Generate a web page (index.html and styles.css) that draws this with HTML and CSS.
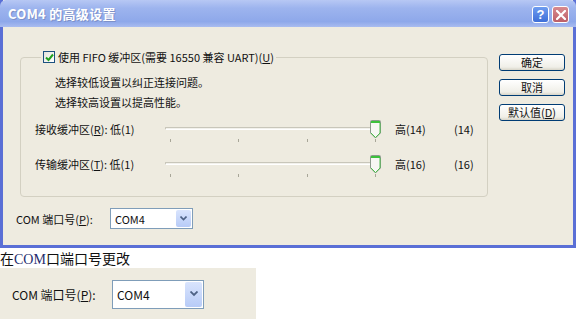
FILE: index.html
```html
<!DOCTYPE html>
<html lang="zh-CN">
<head>
    <meta charset="UTF-8">
    <title>COM4 的高级设置</title>
    <link rel="stylesheet" href="styles.css">
</head>
<body>

<div class="dialog">
    <div class="titlebar">
        <span class="title">COM4 的高级设置</span>
        <span class="title-btns">
            <span class="tbtn help">?</span>
            <span class="tbtn close">
                <svg width="10" height="10" viewBox="0 0 10 10"><path d="M1 1 L9 9 M9 1 L1 9" stroke="#fff" stroke-width="2.2" stroke-linecap="square"/></svg>
            </span>
        </span>
    </div>

    <div class="dialog-body">
        <div class="main">
            <fieldset class="group">
                <legend>
                    <span class="check">
                        <svg width="9" height="9" viewBox="0 0 9 9"><path d="M1 4.5 L3.5 7 L8 1.5" stroke="#21a121" stroke-width="2" fill="none"/></svg>
                    </span>
                    <span>使用 FIFO 缓冲区(需要 16550 兼容 UART)(<u>U</u>)</span>
                </legend>
                <p class="hint">选择较低设置以纠正连接问题。</p>
                <p class="hint">选择较高设置以提高性能。</p>

                <div class="slider-row first">
                    <span class="slider-label">接收缓冲区(<u>R</u>): 低(1)</span>
                    <div class="slider">
                        <div class="track"></div>
                        <div class="ticks"><i></i><i></i><i></i><i></i></div>
                        <svg class="thumb" width="11" height="19" viewBox="0 0 11 19">
                            <path d="M0.5 1.5 Q0.5 0.5 1.5 0.5 L9.5 0.5 Q10.5 0.5 10.5 1.5 L10.5 13 L5.5 18 L0.5 13 Z" fill="#f7f7f4" stroke="#8c9a8c"/>
                            <path d="M1 1 L10 1 L10 3 L1 3 Z" fill="#3cc13c"/>
                            <path d="M10 3 L10 13 L5.5 17.5 M1 13 L5.5 17.5" stroke="#4cbd4c" stroke-width="1" fill="none"/>
                        </svg>
                    </div>
                    <span class="slider-high">高(14)</span>
                    <span class="slider-val">(14)</span>
                </div>

                <div class="slider-row">
                    <span class="slider-label">传输缓冲区(<u>T</u>): 低(1)</span>
                    <div class="slider">
                        <div class="track"></div>
                        <div class="ticks"><i></i><i></i><i></i><i></i></div>
                        <svg class="thumb" width="11" height="19" viewBox="0 0 11 19">
                            <path d="M0.5 1.5 Q0.5 0.5 1.5 0.5 L9.5 0.5 Q10.5 0.5 10.5 1.5 L10.5 13 L5.5 18 L0.5 13 Z" fill="#f7f7f4" stroke="#8c9a8c"/>
                            <path d="M1 1 L10 1 L10 3 L1 3 Z" fill="#3cc13c"/>
                            <path d="M10 3 L10 13 L5.5 17.5 M1 13 L5.5 17.5" stroke="#4cbd4c" stroke-width="1" fill="none"/>
                        </svg>
                    </div>
                    <span class="slider-high">高(16)</span>
                    <span class="slider-val">(16)</span>
                </div>
            </fieldset>

            <div class="port-row">
                <span class="port-label">COM 端口号(<u>P</u>):</span>
                <div class="combo">
                    <span class="combo-text">COM4</span>
                    <span class="combo-btn">
                        <svg width="7" height="5" viewBox="0 0 7 5"><path d="M0.5 0.5 L3.5 3.5 L6.5 0.5" stroke="#4d6185" stroke-width="1.6" fill="none"/></svg>
                    </span>
                </div>
            </div>
        </div>

        <div class="buttons">
            <a class="btn">确定</a>
            <a class="btn">取消</a>
            <a class="btn">默认值(<u>D</u>)</a>
        </div>
    </div>
</div>

<p class="caption">在<span class="latin">COM</span>口端口号更改</p>

<div class="zoom-box">
    <span class="port-label">COM 端口号(<u>P</u>):</span>
    <div class="combo big">
        <span class="combo-text">COM4</span>
        <span class="combo-btn">
            <svg width="8" height="6" viewBox="0 0 8 6"><path d="M0.5 0.5 L4 4 L7.5 0.5" stroke="#4d6185" stroke-width="1.8" fill="none"/></svg>
        </span>
    </div>
</div>

</body>
</html>
```

FILE: styles.css
```css
body {
    margin: 0;
    padding: 0;
    background-color: white;
    font-family: "Noto Sans CJK SC", sans-serif;
    font-size: 11px;
    color: #111;
}
u {
    text-decoration: underline;
}
/* Ventana */
.dialog {
    width: 576px;
    height: 248px;
    box-sizing: border-box;
    background-color: #eeebe0;
    border: 3px solid #5a6fd6;
    border-top: 0;
    display: flex;
    flex-direction: column;
}
.titlebar {
    height: 27px;
    margin: 0 -3px;
    background: linear-gradient(to bottom, #b7c8f4 0%, #9db4ee 30%, #8ea8ea 80%, #a9bcf0 100%);
    border-radius: 6px 6px 0 0;
    display: flex;
    align-items: center;
    justify-content: space-between;
    padding: 0 7px 0 8px;
}
.title {
    color: white;
    font-weight: bold;
    font-size: 13px;
    text-shadow: 1px 1px 0 #7d90c8;
    letter-spacing: 0.3px;
}
.title-btns {
    display: flex;
    gap: 3px;
    margin-top: 2px;
}
.tbtn {
    width: 15px;
    height: 15px;
    border: 1px solid white;
    border-radius: 3px;
    display: flex;
    align-items: center;
    justify-content: center;
    color: white;
    font-family: "Liberation Sans", sans-serif;
    font-weight: bold;
    font-size: 13px;
}
.help {
    background: linear-gradient(to bottom, #6e9cf0, #3f6fd8);
}
.close {
    background: linear-gradient(to bottom, #d88a8e, #bc5f68);
}
.dialog-body {
    flex: 1;
    display: flex;
    padding: 0 7px 0 17px;
}
.main {
    width: 468px;
}
/* Marco de grupo */
.group {
    margin: 23px 0 0 0;
    padding: 10px 0 0 14px;
    height: 147px;
    box-sizing: border-box;
    border: 1px solid #d3d0c2;
    border-radius: 4px;
}
.group legend {
    margin-left: 6px;
    padding: 0 2px;
    display: flex;
    align-items: center;
    gap: 3px;
    height: 14px;
}
.check {
    width: 12px;
    height: 12px;
    box-sizing: border-box;
    border: 1px solid #1c5180;
    background: linear-gradient(to bottom right, #e3e3dc, #fff);
    display: flex;
    align-items: center;
    justify-content: center;
}
.hint {
    margin: 0 0 4px 20px;
    line-height: 16px;
}
.slider-row {
    display: flex;
    align-items: flex-start;
    height: 35px;
}
.slider-row.first {
    margin-top: 11px;
}
.slider-label {
    width: 130px;
    line-height: 16px;
}
.slider {
    position: relative;
    width: 216px;
    height: 24px;
}
.track {
    margin-top: 6px;
    height: 3px;
    box-sizing: border-box;
    border: 1px solid #c8c6ba;
    border-bottom-color: white;
    background-color: #f2f1ec;
    border-radius: 1px;
}
.ticks {
    display: flex;
    justify-content: space-between;
    padding: 0 5px;
    margin-top: 9px;
}
.ticks i {
    width: 1px;
    height: 3px;
    background-color: #a8a698;
}
.thumb {
    position: absolute;
    right: 0;
    top: -1px;
}
.slider-high {
    width: 59px;
    margin-left: 14px;
    line-height: 16px;
}
.slider-val {
    line-height: 16px;
}
/* Puerto */
.port-row {
    display: flex;
    align-items: center;
    margin-top: 11px;
    margin-left: -4px;
}
.port-label {
    width: 94px;
}
.combo {
    width: 83px;
    height: 21px;
    box-sizing: border-box;
    border: 1px solid #7f9db9;
    background-color: white;
    display: flex;
    align-items: center;
    justify-content: space-between;
    padding: 1px;
}
.combo-text {
    padding-left: 3px;
}
.combo-btn {
    width: 15px;
    height: 17px;
    border-radius: 2px;
    background: linear-gradient(to bottom, #d9e4fd, #b7cbf7);
    display: flex;
    align-items: center;
    justify-content: center;
}
/* Botones */
.buttons {
    margin-left: 11px;
    margin-top: 27px;
    display: flex;
    flex-direction: column;
    gap: 8px;
}
.btn {
    width: 66px;
    height: 17px;
    box-sizing: border-box;
    border: 1px solid #003c74;
    border-radius: 3px;
    background: linear-gradient(to bottom, #ffffff, #f0efe8 80%, #d8d5c8);
    display: flex;
    align-items: center;
    justify-content: center;
    font-size: 11px;
    line-height: 1;
}
/* Pie */
.caption {
    margin: 2px 0 0 0;
    font-size: 14px;
    line-height: 17px;
    color: #111;
}
.caption .latin {
    font-family: "Liberation Serif", serif;
    color: #1f2d6e;
}
.zoom-box {
    width: 256px;
    height: 52px;
    background-color: #eeebe0;
    display: flex;
    align-items: center;
    padding-left: 12px;
    box-sizing: border-box;
    font-size: 12px;
}
.zoom-box .port-label {
    width: 100px;
}
.combo.big {
    width: 92px;
    height: 29px;
}
.combo.big .combo-btn {
    width: 17px;
    height: 25px;
}
```
